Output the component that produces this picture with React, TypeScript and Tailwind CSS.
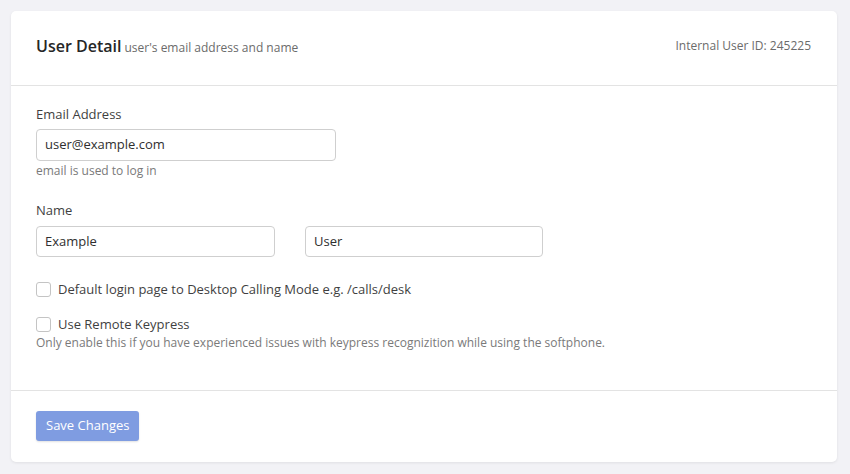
import React from "react";

export default function App() {
  return (
    <div
      className="min-h-[474px] w-[850px] bg-[#f2f2f6] p-[11px]"
      style={{ fontFamily: '"Open Sans", "Liberation Sans", sans-serif' }}
    >
      <div className="w-[826px] rounded-[5px] bg-white shadow-[0_1px_3px_rgba(0,0,0,0.08)]">
        <div className="flex h-[75px] items-center justify-between border-b border-[#e3e3e3] pb-[4px] pl-[25px] pr-[26px]">
          <div className="flex items-baseline gap-[3px]">
            <span className="text-[16px] font-semibold text-[#262626]">User Detail</span>
            <span className="text-[12px] text-[#6b6b6b]">user's email address and name</span>
          </div>
          <span className="text-[12px] text-[#6b6b6b]">Internal User ID: 245225</span>
        </div>

        <div className="border-b border-[#e3e3e3] pt-[18px] pb-[39px] pl-[25px] pr-6">
          <div className="text-[13px] leading-5 text-[#3f3f3f]">Email Address</div>
          <div className="mt-[5px] flex h-[32px] w-[300px] items-center rounded-[4px] border border-[#cfcfcf] px-2 text-[13px] text-[#2f2f2f]">
            user@example.com
          </div>
          <div className="mt-[2px] text-[12px] leading-4 text-[#7a7a7a]">email is used to log in</div>

          <div className="mt-[21px] text-[13px] leading-5 text-[#3f3f3f]">Name</div>
          <div className="mt-[6px] flex gap-[30px]">
            <div className="flex h-[31px] w-[239px] items-center rounded-[4px] border border-[#cfcfcf] px-2 text-[13px] text-[#2f2f2f]">
              Example
            </div>
            <div className="flex h-[31px] w-[238px] items-center rounded-[4px] border border-[#cfcfcf] px-2 text-[13px] text-[#2f2f2f]">
              User
            </div>
          </div>

          <div className="mt-[22px] flex items-center gap-[7px]">
            <span className="block h-[15px] w-[15px] rounded-[3px] border border-[#c4c4c4] bg-white" />
            <span className="text-[13px] leading-5 text-[#3f3f3f]">
              Default login page to Desktop Calling Mode e.g. /calls/desk
            </span>
          </div>

          <div className="mt-[15px] flex items-center gap-[7px]">
            <span className="block h-[15px] w-[15px] rounded-[3px] border border-[#c4c4c4] bg-white" />
            <span className="text-[13px] leading-5 text-[#3f3f3f]">Use Remote Keypress</span>
          </div>
          <div className="mt-[1px] text-[12px] leading-4 text-[#7a7a7a]">
            Only enable this if you have experienced issues with keypress recognizition while using the softphone.
          </div>
        </div>

        <div className="pt-5 pb-[21px] pl-[25px] pr-6">
          <button className="h-[30px] rounded-[3px] bg-[#7f9ce1] px-[10px] text-[13px] text-white shadow-[0_1px_2px_rgba(0,0,0,0.12)]">
            Save Changes
          </button>
        </div>
      </div>
    </div>
  );
}
